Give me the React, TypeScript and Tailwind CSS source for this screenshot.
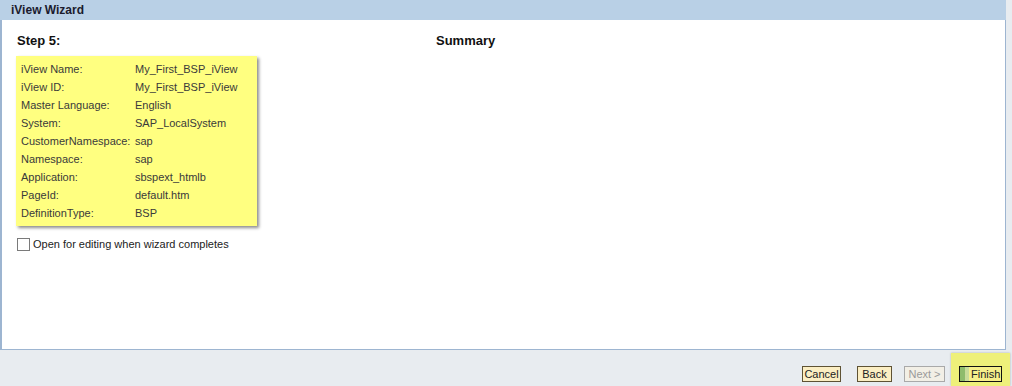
import React from "react";

const rows: [string, string][] = [
  ["iView Name:", "My_First_BSP_iView"],
  ["iView ID:", "My_First_BSP_iView"],
  ["Master Language:", "English"],
  ["System:", "SAP_LocalSystem"],
  ["CustomerNamespace:", "sap"],
  ["Namespace:", "sap"],
  ["Application:", "sbspext_htmlb"],
  ["PageId:", "default.htm"],
  ["DefinitionType:", "BSP"],
];

export default function App() {
  return (
    <div
      className="w-[1012px] h-[386px] bg-[#e8ecf0] flex flex-col overflow-hidden"
      style={{ fontFamily: "Tahoma, 'DejaVu Sans', 'Liberation Sans', sans-serif" }}
    >
      <div className="flex flex-col w-[1006px] h-[350px]">
        <div className="h-[20px] bg-[#b9d0e6] flex items-center pl-[11px] text-[12px] font-bold text-[#1b1b2e] [font-family:'Liberation_Sans',sans-serif]">
          iView Wizard
        </div>
        <div className="flex-1 bg-white border-l-2 border-r border-b border-[#9db5d1] relative">
          <div className="flex pt-[13px]">
            <div className="w-[434px] pl-[15px] flex flex-col">
              <div className="text-[13px] font-bold text-[#111] leading-[16px] [font-family:'Liberation_Sans',sans-serif]">
                Step 5:
              </div>
              <div className="mt-[7px] ml-[-1px] w-[241px] h-[170px] bg-[#ffff80] shadow-[2px_2px_3px_rgba(0,0,0,0.45)] pt-[4px] pl-[5px] text-[11px] text-[#3a3a3a] [font-family:'Liberation_Sans',sans-serif]">
                {rows.map(([k, v]) => (
                  <div key={k} className="flex h-[18px] items-center">
                    <div className="w-[114px]">{k}</div>
                    <div>{v}</div>
                  </div>
                ))}
              </div>
              <label className="mt-[10px] flex items-center gap-[3px] text-[11px] text-[#222] [font-family:'Liberation_Sans',sans-serif]">
                <span className="w-[13px] h-[13px] border border-[#7a7a7a] bg-white inline-block" />
                Open for editing when wizard completes
              </label>
            </div>
            <div className="text-[13px] font-bold text-[#111] leading-[16px] [font-family:'Liberation_Sans',sans-serif]">
              Summary
            </div>
          </div>
        </div>
      </div>
      <div className="flex-1 flex items-end justify-end [font-family:'Liberation_Sans',sans-serif] text-[11px]">
        <button className="h-[16px] w-[39px] mb-[4px] mr-[16px] bg-[#fbeec3] border border-[#5e5234] text-[#222] leading-[14px] text-center">
          Cancel
        </button>
        <button className="h-[16px] w-[35px] mb-[4px] mr-[12px] bg-[#fbeec3] border border-[#5e5234] text-[#222] leading-[14px] text-center">
          Back
        </button>
        <button className="h-[16px] w-[41px] mb-[4px] mr-[6px] bg-[#f2efe6] border border-[#a9a9a9] text-[#9a9a9a] leading-[14px] text-center">
          {"Next >"}
        </button>
        <div className="w-[59px] h-[33px] bg-[#eef07a] shadow-[0_0_2px_rgba(0,0,0,0.25)] flex items-end justify-center pb-[4px] mr-[2px]">
          <button className="h-[16px] w-[43px] flex border border-[#111] bg-[#f6ef8a] text-[#222] leading-[14px]">
            <span className="w-[5px] h-full bg-[#8ebc6c]" />
            <span className="w-[4px] h-full bg-[#c8dc9a]" />
            <span className="flex-1 text-left pl-[2px]">Finish</span>
          </button>
        </div>
      </div>
    </div>
  );
}
